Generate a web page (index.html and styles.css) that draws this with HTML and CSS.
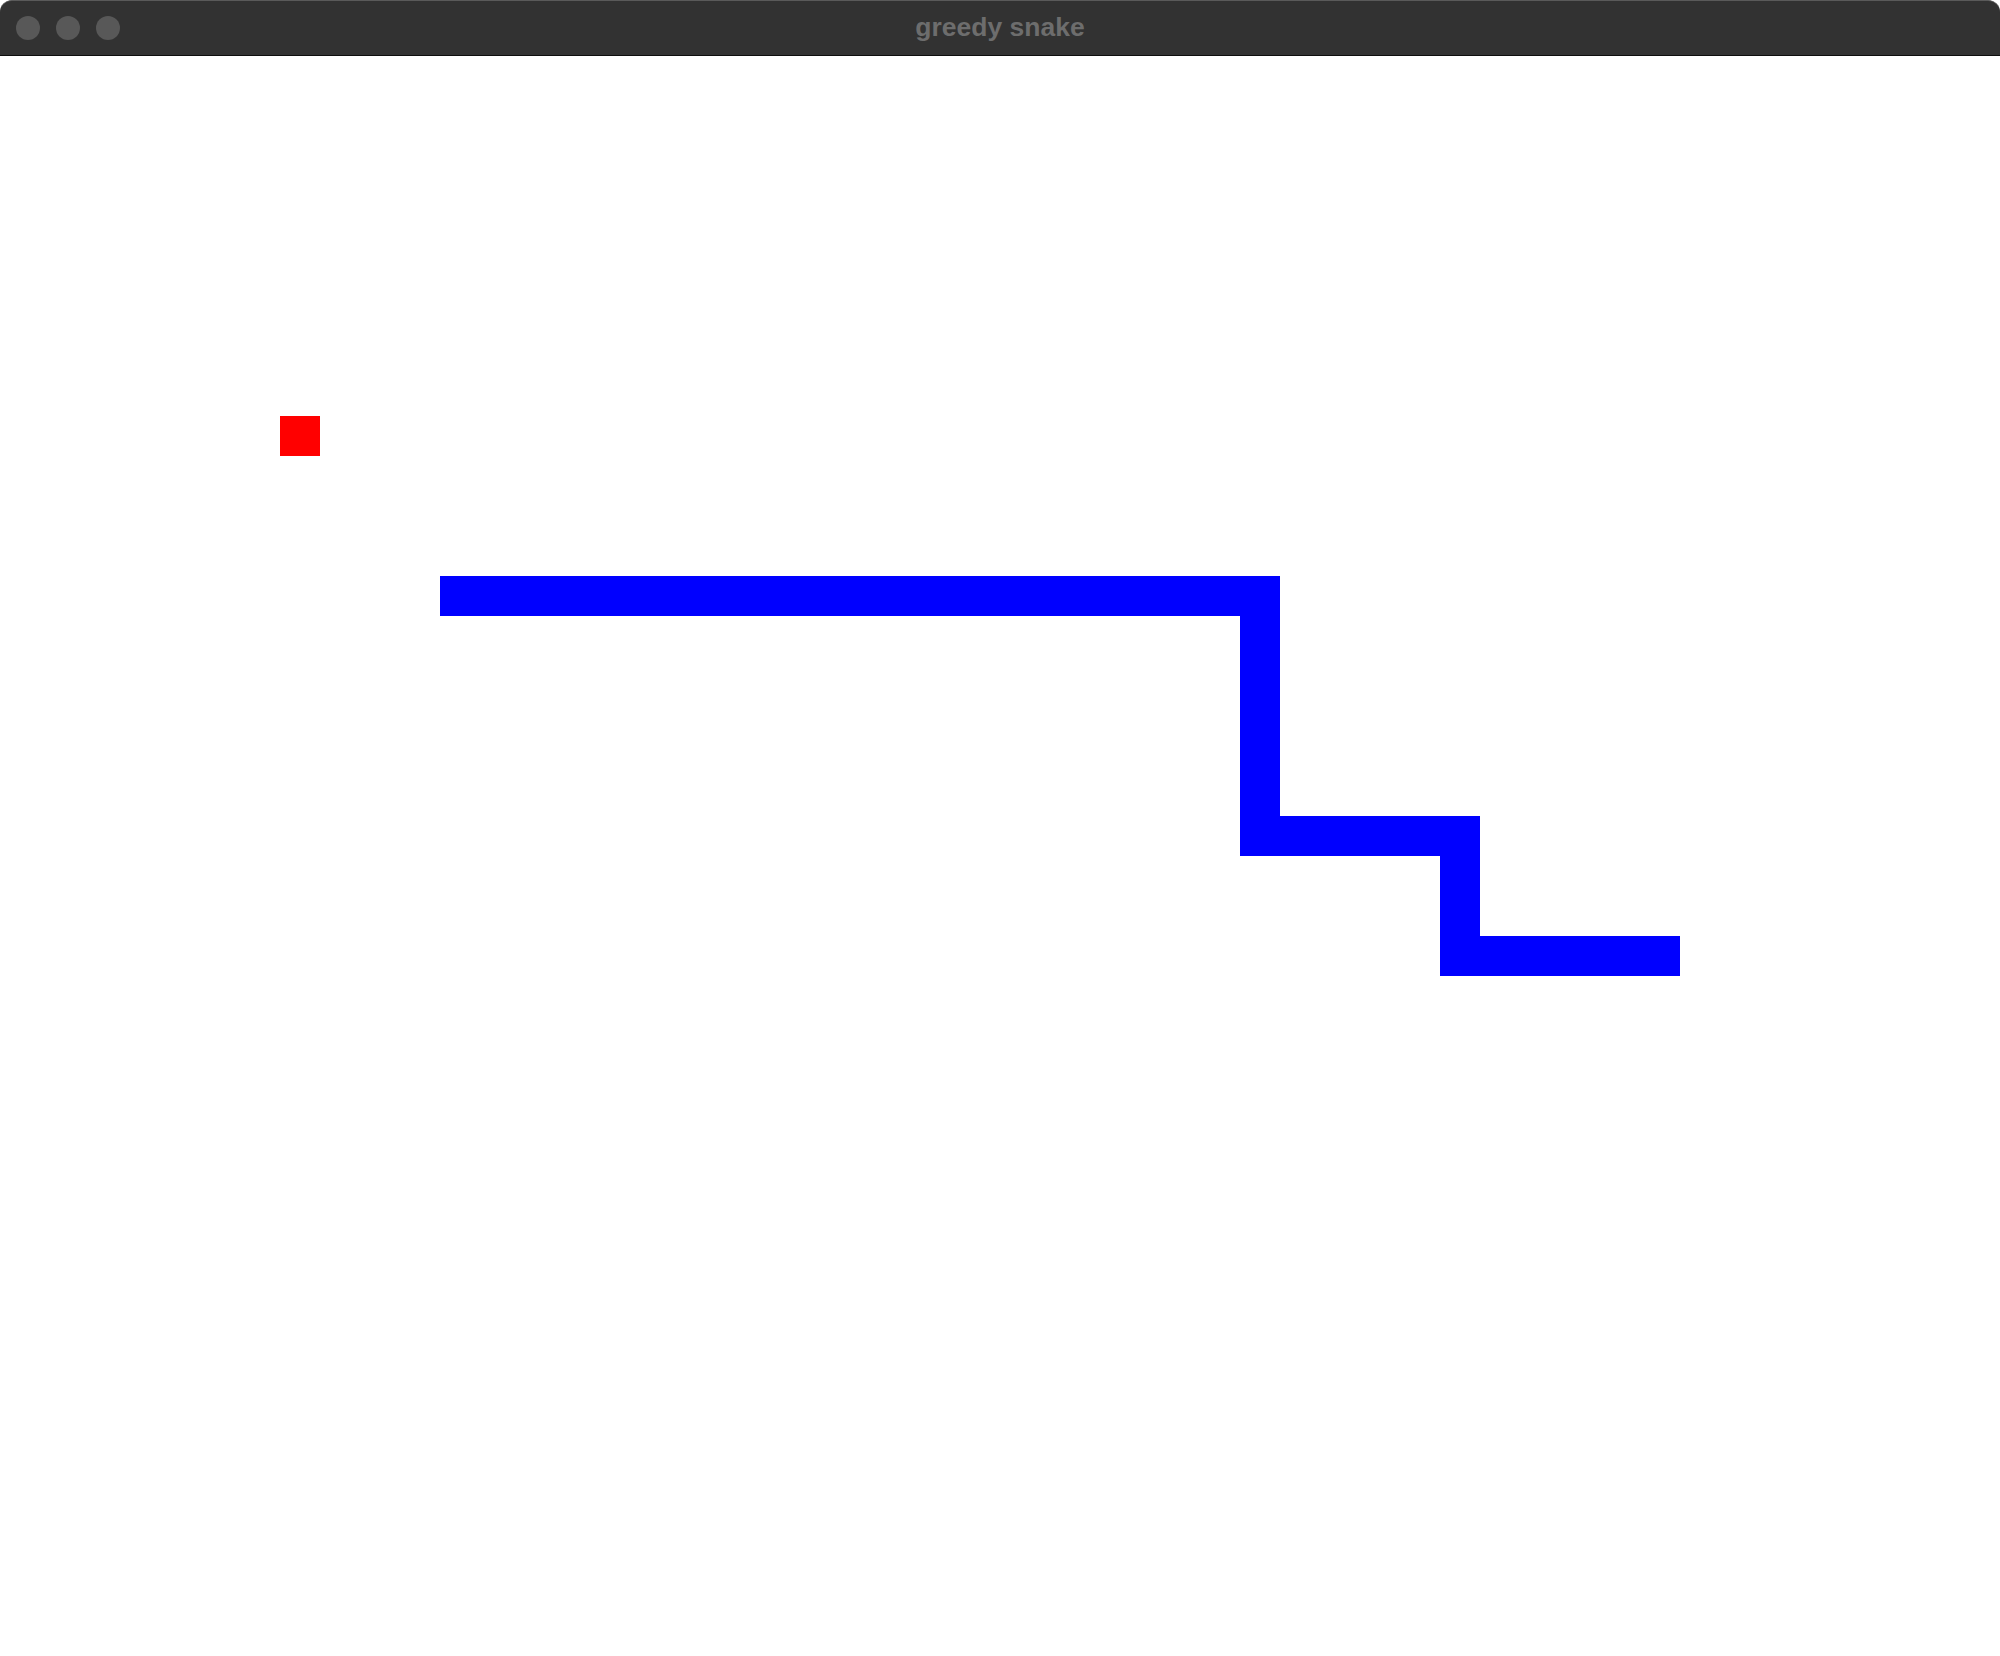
FILE: index.html
```html
<!DOCTYPE html>
<html>
<head>
<meta charset="utf-8">
<title>greedy snake</title>
<link rel="stylesheet" href="styles.css">
</head>
<body>
<div class="window">
  <header class="titlebar">
    <div class="lights">
      <span class="light"></span>
      <span class="light"></span>
      <span class="light"></span>
    </div>
    <div class="title">greedy snake</div>
  </header>
  <main class="board">
    <div class="food" style="grid-area: 10 / 8 / 11 / 9;"></div>
    <div class="seg" style="grid-area: 14 / 12 / 15 / 33;"></div>
    <div class="seg" style="grid-area: 14 / 32 / 21 / 33;"></div>
    <div class="seg" style="grid-area: 20 / 32 / 21 / 38;"></div>
    <div class="seg" style="grid-area: 20 / 37 / 24 / 38;"></div>
    <div class="seg" style="grid-area: 23 / 37 / 24 / 43;"></div>
  </main>
</div>
</body>
</html>
```

FILE: styles.css
```css
html, body {
  margin: 0;
  padding: 0;
  background: #ffffff;
}
.window {
  width: 2000px;
  height: 1656px;
  display: flex;
  flex-direction: column;
  overflow: hidden;
  background: #ffffff;
}
.titlebar {
  position: relative;
  height: 56px;
  flex: 0 0 56px;
  background: #323232;
  border-top: 1px solid #5a5a5a;
  border-bottom: 1px solid #0e0e0e;
  box-sizing: border-box;
  border-radius: 12px 12px 0 0;
  display: flex;
  align-items: center;
  justify-content: center;
}
.lights {
  position: absolute;
  left: 16px;
  top: 15px;
  display: flex;
  gap: 16px;
}
.light {
  width: 24px;
  height: 24px;
  border-radius: 50%;
  background: #585858;
}
.title {
  font-family: "Liberation Sans", Arial, sans-serif;
  font-weight: bold;
  font-size: 26.5px;
  color: #6d6d6d;
  margin-top: -2px;
}
.board {
  flex: 1;
  display: grid;
  grid-template-columns: repeat(50, 40px);
  grid-template-rows: repeat(40, 40px);
}
.food {
  background: #ff0000;
}
.seg {
  background: #0000ff;
}
```
